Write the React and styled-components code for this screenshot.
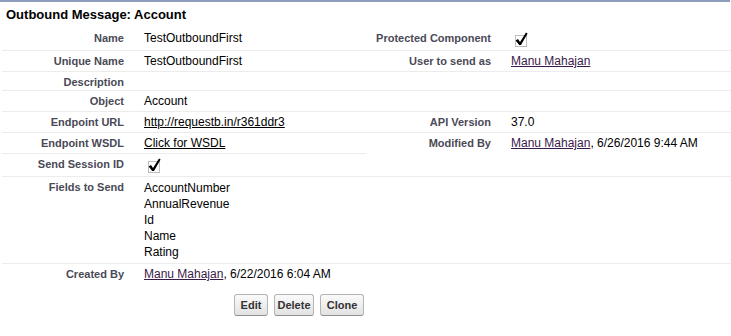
import React from "react";
import styled, { createGlobalStyle } from "styled-components";

const GlobalStyle = createGlobalStyle`
  html, body {
    margin: 0;
    padding: 0;
    background: #ffffff;
  }
  body {
    font-family: "Liberation Sans", Arial, sans-serif;
    font-size: 12px;
    color: #000000;
  }
`;

const fields = ["AccountNumber", "AnnualRevenue", "Id", "Name", "Rating"];

function CheckImg() {
  return (
    <CheckSvg width="17" height="16" viewBox="0 0 17 16">
      <rect
        x="4.5"
        y="4.5"
        width="11"
        height="11"
        fill="none"
        stroke="#7a7a7a"
        strokeWidth="1"
        strokeDasharray="1 1"
      />
      <path
        d="M4.6 9.4 L7 8 L9 11 L15 1.4 L16.6 2.4 L10 14 L8.2 14 Z"
        fill="#000000"
      />
    </CheckSvg>
  );
}

export default function App() {
  return (
    <>
      <GlobalStyle />
      <Block>
        <Header>
          <Title>Outbound Message: Account</Title>
        </Header>
        <Detail>
          <tbody>
            <Row>
              <Label>Name</Label>
              <Data>TestOutboundFirst</Data>
              <Label>Protected Component</Label>
              <Data>
                <CheckImg />
              </Data>
            </Row>
            <Row>
              <Label>Unique Name</Label>
              <Data>TestOutboundFirst</Data>
              <Label>User to send as</Label>
              <Data>
                <UserLink href="#">Manu Mahajan</UserLink>
              </Data>
            </Row>
            <Row>
              <Label>Description</Label>
              <Data></Data>
              <Label></Label>
              <Data></Data>
            </Row>
            <Row>
              <Label>Object</Label>
              <Data>Account</Data>
              <Label></Label>
              <Data></Data>
            </Row>
            <Row>
              <Label>Endpoint URL</Label>
              <Data>
                <Link href="#">http://requestb.in/r361ddr3</Link>
              </Data>
              <Label>API Version</Label>
              <Data>37.0</Data>
            </Row>
            <Row>
              <Label>Endpoint WSDL</Label>
              <Data>
                <Link href="#">Click for WSDL</Link>
              </Data>
              <Label rowSpan={2}>Modified By</Label>
              <Data rowSpan={2}>
                <UserLink href="#">Manu Mahajan</UserLink>, 6/26/2016 9:44 AM
              </Data>
            </Row>
            <Row>
              <Label>Send Session ID</Label>
              <Data>
                <CheckImg />
              </Data>
            </Row>
            <Row>
              <Label>Fields to Send</Label>
              <Data>
                <FieldList>
                  {fields.map((f) => (
                    <div key={f}>{f}</div>
                  ))}
                </FieldList>
              </Data>
              <Label></Label>
              <Data></Data>
            </Row>
            <Row $last>
              <Label>Created By</Label>
              <Data>
                <UserLink href="#">Manu Mahajan</UserLink>, 6/22/2016 6:04 AM
              </Data>
              <Label></Label>
              <Data></Data>
            </Row>
          </tbody>
        </Detail>
        <Buttons>
          <Btn $w={34}>Edit</Btn>
          <Btn $w={40}>Delete</Btn>
          <Btn $w={44}>Clone</Btn>
        </Buttons>
      </Block>
    </>
  );
}

// Styles

const Block = styled.div`
  width: 730px;
  border-top: 2px solid #8e9dbe;
  background: #ffffff;
`;

const Header = styled.div`
  padding: 5px 0 6px 6px;
`;

const Title = styled.h2`
  margin: 0;
  font-size: 13px;
  line-height: 15px;
  font-weight: bold;
  color: #000000;
`;

const Detail = styled.table`
  width: 729px;
  margin-left: 2px;
  border-collapse: collapse;
  border-spacing: 0;
  table-layout: fixed;
`;

const Row = styled.tr`
  & > td {
    border-bottom: ${(p) => (p.$last ? "none" : "1px solid #ececec")};
  }
  & > td:nth-child(1) {
    width: 122px;
  }
  & > td:nth-child(2) {
    width: 222px;
  }
  & > td:nth-child(3) {
    width: 125px;
  }
`;

const Label = styled.td`
  padding: 4px 10px 2px 0;
  text-align: right;
  vertical-align: top;
  font-size: 11px;
  line-height: 12px;
  font-weight: bold;
  color: #4a4a56;
  white-space: nowrap;
`;

const Data = styled.td`
  padding: 3px 0 3px 10px;
  vertical-align: top;
  font-size: 12px;
  line-height: 14px;
  color: #000000;
  white-space: nowrap;
`;

const CheckSvg = styled.svg`
  display: block;
`;

const Link = styled.a`
  color: #000000;
  text-decoration: underline;
`;

const UserLink = styled.a`
  color: #3a1a4a;
  text-decoration: underline;
`;

const FieldList = styled.div`
  line-height: 16px;
`;

const Buttons = styled.div`
  display: flex;
  gap: 6px;
  padding: 10px 0 0 234px;
`;

const Btn = styled.button`
  box-sizing: border-box;
  width: ${(p) => p.$w}px;
  height: 22px;
  padding: 0;
  font-family: "Liberation Sans", Arial, sans-serif;
  font-size: 11px;
  font-weight: bold;
  color: #333333;
  background: linear-gradient(#fafafa, #e2e2e2);
  border: 1px solid #b5b5b5;
  border-bottom-color: #8f8f8f;
  border-radius: 3px;
  cursor: pointer;
`;
